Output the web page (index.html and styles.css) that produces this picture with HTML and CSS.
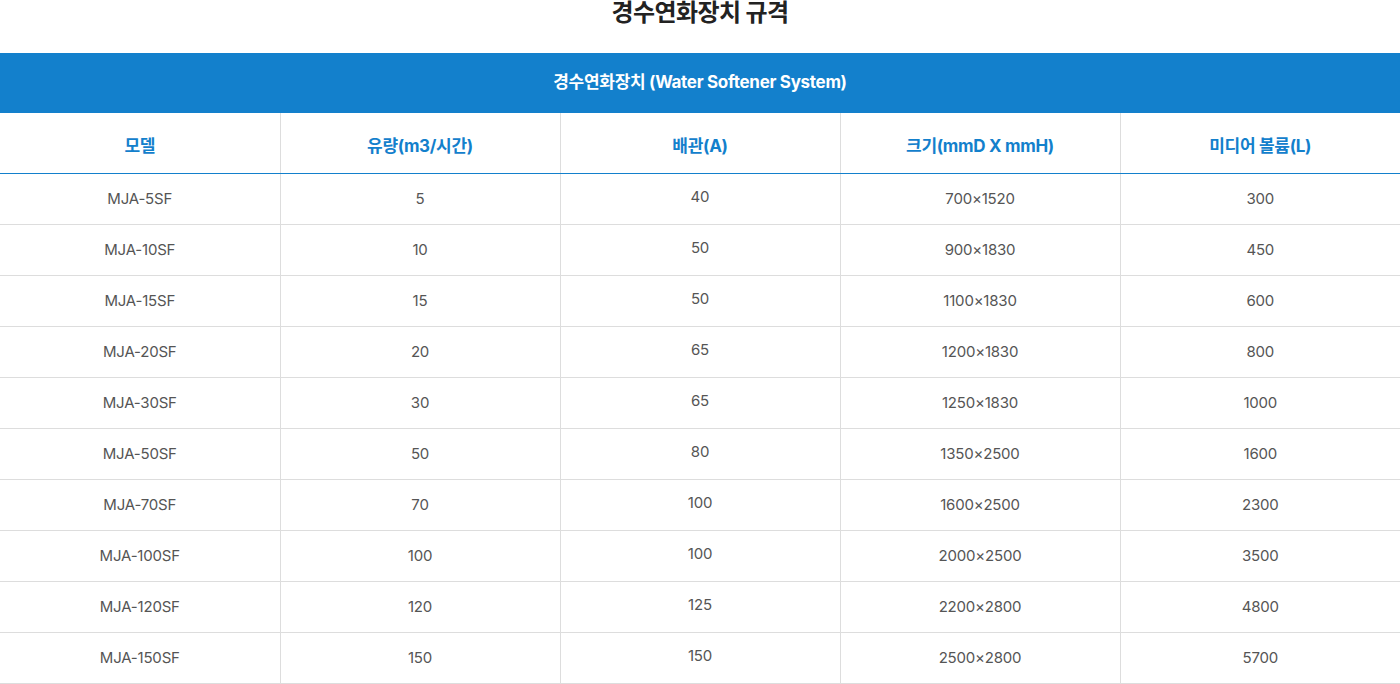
FILE: index.html
```html
<!DOCTYPE html>
<html lang="ko">

<head>
    <meta charset="UTF-8">
    <title>경수연화장치 규격</title>
    <link rel="stylesheet" href="styles.css">
</head>

<body>
    <h2 class="spec-title">경수연화장치 규격</h2>

    <table class="spec-table">
        <thead>
            <tr>
                <th colspan="5" class="caption-row">경수연화장치 (Water Softener System)</th>
            </tr>
            <tr class="head-row">
                <th>모델</th>
                <th>유량(m3/시간)</th>
                <th>배관(A)</th>
                <th>크기(mmD X mmH)</th>
                <th>미디어 볼륨(L)</th>
            </tr>
        </thead>
        <tbody>
            <tr><td>MJA-5SF</td><td>5</td><td class="pipe">40</td><td>700×1520</td><td>300</td></tr>
            <tr><td>MJA-10SF</td><td>10</td><td class="pipe">50</td><td>900×1830</td><td>450</td></tr>
            <tr><td>MJA-15SF</td><td>15</td><td class="pipe">50</td><td>1100×1830</td><td>600</td></tr>
            <tr><td>MJA-20SF</td><td>20</td><td class="pipe">65</td><td>1200×1830</td><td>800</td></tr>
            <tr><td>MJA-30SF</td><td>30</td><td class="pipe">65</td><td>1250×1830</td><td>1000</td></tr>
            <tr><td>MJA-50SF</td><td>50</td><td class="pipe">80</td><td>1350×2500</td><td>1600</td></tr>
            <tr><td>MJA-70SF</td><td>70</td><td class="pipe">100</td><td>1600×2500</td><td>2300</td></tr>
            <tr><td>MJA-100SF</td><td>100</td><td class="pipe">100</td><td>2000×2500</td><td>3500</td></tr>
            <tr><td>MJA-120SF</td><td>120</td><td class="pipe">125</td><td>2200×2800</td><td>4800</td></tr>
            <tr><td>MJA-150SF</td><td>150</td><td class="pipe">150</td><td>2500×2800</td><td>5700</td></tr>
        </tbody>
    </table>
</body>

</html>
```

FILE: styles.css
```css
body {
    margin: 0;
    background-color: #fff;
    color: #555;
    font-family: Inter, "Noto Sans CJK KR", sans-serif;
}

.spec-title {
    margin: 0;
    height: 53px;
    font-size: 24px;
    line-height: 25px;
    font-weight: 700;
    color: #222;
    text-align: center;
    letter-spacing: -0.6px;
}

.spec-table {
    width: 100%;
    border-collapse: collapse;
    table-layout: fixed;
}

.spec-table th,
.spec-table td {
    text-align: center;
    padding: 0;
}

.spec-table .caption-row {
    height: 60px;
    padding-top: 19px;
    box-sizing: border-box;
    vertical-align: top;
    line-height: 20px;
    background-color: #1380cc;
    color: #fff;
    font-size: 17px;
    font-weight: 700;
    letter-spacing: -0.3px;
}

.head-row th {
    height: 60px;
    padding-top: 4px;
    box-sizing: border-box;
    color: #1380cc;
    font-size: 17px;
    font-weight: 700;
    letter-spacing: -0.3px;
    border-left: 1px solid #ddd;
    border-bottom: 1px solid #1380cc;
}

.spec-table td {
    height: 50px;
    font-size: 15px;
    color: #555;
    letter-spacing: -0.2px;
    border-left: 1px solid #ddd;
    border-bottom: 1px solid #ddd;
}

.head-row th:first-child,
.spec-table td:first-child {
    border-left: none;
}

.spec-table td.pipe {
    height: 46px;
    padding-bottom: 4px;
}
```
